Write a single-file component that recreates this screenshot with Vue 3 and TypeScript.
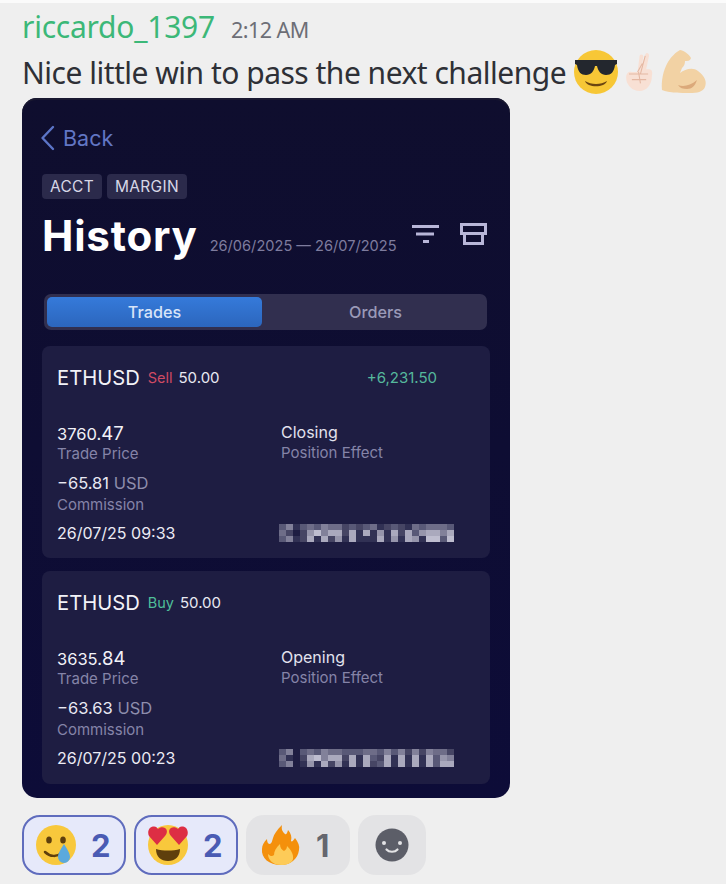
<script setup lang="ts">
interface Trade {
  symbol: string;
  side: "Sell" | "Buy";
  volume: string;
  profit?: string;
  price: [string, string];
  effect: string;
  commission: string;
  time: string;
  blur: string[];
}

// mosaic of the redacted ticket number, one digit per block: 0 is no tint, 9 is brightest
const trades: Trade[] = [
  {
    symbol: "ETHUSD",
    side: "Sell",
    volume: "50.00",
    profit: "+6,231.50",
    price: ["3760.", "47"],
    effect: "Closing",
    commission: "−65.81",
    time: "26/07/25 09:33",
    blur: [
      "3513435442323412321434443",
      "4202685772717161727367757",
      "3512717261711171617618838",
    ],
  },
  {
    symbol: "ETHUSD",
    side: "Buy",
    volume: "50.00",
    price: ["3635.", "84"],
    effect: "Opening",
    commission: "−63.63",
    time: "26/07/25 00:23",
    blur: [
      "3503435443334435352525442",
      "4102785772717327171717365",
      "3501617261717237171717377",
    ],
  },
];

const cells = (rows: string[]) =>
  rows.flatMap((row, y) =>
    [...row].map((c, x) => ({ x: x * 7, y: y * 6, o: Number(c) / 10 })),
  );
</script>

<template>
  <div class="page">
    <div class="top-line"></div>
    <div class="head">
      <span class="user">riccardo_1397</span>
      <span class="stamp">2:12 AM</span>
    </div>
    <div class="message">
      <span>Nice little win to pass the next challenge</span>
      <svg class="emoji cool" viewBox="0 0 44 44">
        <circle cx="22" cy="22" r="22" fill="#f7c736" />
        <path d="M1 10h42v4l-2 1c-1 7-4 10-9 10s-8-4-9-9h-2c-1 5-4 9-9 9s-8-3-9-10l-2-1z" fill="#23272e" />
        <path d="M11 31c6 4 16 4 22 0-2 7-20 7-22 0z" fill="#6b4511" />
      </svg>
      <svg class="emoji fingers" viewBox="0 0 30 44">
        <path d="M13 22 15 6c0-3 4-3 4 0l-1 7 3-9c1-3 4-2 4 1l-3 14h3c3 0 4 3 3 7 0 9-5 16-13 16C8 42 1 36 1 28c0-5 3-7 6-6z" fill="#f8e0d4" />
        <path d="M13 22 18 13M16 24 21 5M4 24h20M7 30h15M14 22l2 12" stroke="#e4b7a2" stroke-width="1.100" fill="none" />
      </svg>
      <svg class="emoji muscle" viewBox="0 0 46 44">
        <path d="M1 40c-1-8 1-20 6-28 3-5 8-10 12-12 3 0 9 4 11 8-1 3-3 3-6 3 0 3-1 5-3 7l-2 5c5-4 13-6 18-2 7 5 9 11 7 16-2 5-8 6-15 6-9 0-21 0-28-3z" fill="#f2d2a4" />
        <path d="M17 35c5 2 12 1 19-5-2 6-5 9-10 9-4 0-7-1-9-4z" fill="#dba97a" />
      </svg>
    </div>

    <div class="shot">
      <div class="back">
        <svg class="chev" viewBox="0 0 15 26">
          <path d="M13 2 2.500 13 13 24" />
        </svg>
        <span>Back</span>
      </div>
      <div class="tags">
        <span class="tag">ACCT</span>
        <span class="tag">MARGIN</span>
      </div>
      <div class="title-row">
        <span class="title">History</span>
        <span class="range">26/06/2025 — 26/07/2025</span>
        <div class="tools">
          <svg class="tool" viewBox="0 0 27 18">
            <path d="M0 1.500h27M4 9h18M11 16.500h6" />
          </svg>
          <svg class="tool printer" viewBox="0 0 27 22">
            <path d="M1.500 1.500h24v9h-24zM4.500 10.500v10h18v-10" />
          </svg>
        </div>
      </div>

      <div class="tabs">
        <div class="tab on">Trades</div>
        <div class="tab">Orders</div>
      </div>

      <div v-for="t in trades" :key="t.time" class="card">
        <div class="card-top">
          <span class="symbol">{{ t.symbol }}</span>
          <span :class="t.side === 'Sell' ? 'sell' : 'buy'">{{ t.side }}</span>
          <span class="vol">{{ t.volume }}</span>
          <span v-if="t.profit" class="profit">{{ t.profit }}</span>
        </div>
        <div class="cols">
          <div>
            <div class="price">{{ t.price[0] }}<span class="cents">{{ t.price[1] }}</span></div>
            <div class="label">Trade Price</div>
          </div>
          <div>
            <div class="effect">{{ t.effect }}</div>
            <div class="label">Position Effect</div>
          </div>
        </div>
        <div class="comm">
          {{ t.commission }} <span class="unit">USD</span>
        </div>
        <div class="label comm-label">Commission</div>
        <div class="cols foot">
          <div class="time">{{ t.time }}</div>
          <svg class="mosaic" viewBox="0 0 175 18">
            <rect
              v-for="(c, i) in cells(t.blur)"
              :key="i"
              :x="c.x"
              :y="c.y"
              width="7"
              height="6"
              fill="#e6e6f2"
              :fill-opacity="c.o"
            />
          </svg>
        </div>
      </div>
    </div>

    <div class="reactions">
      <div class="chip mine">
        <svg class="chip-icon" viewBox="0 0 40 40">
          <circle cx="20" cy="20" r="20" fill="#f8c83c" />
          <ellipse cx="13" cy="15" rx="2.800" ry="3.600" fill="#5f3f0c" />
          <ellipse cx="27" cy="15" rx="2.800" ry="3.600" fill="#5f3f0c" />
          <path d="M9 27c5 5 12 5 17 1" stroke="#5f3f0c" stroke-width="2.500" fill="none" stroke-linecap="round" />
          <path d="M28 19c3 5 6 9 6 13a6 6 0 0 1-12 0c0-4 3-8 6-13z" fill="#5ba9dd" />
        </svg>
        <span>2</span>
      </div>
      <div class="chip mine">
        <svg class="chip-icon" viewBox="0 0 40 40">
          <circle cx="20" cy="20" r="20" fill="#f8c83c" />
          <path d="M9 20 1 11C-1 7 1 2 5 1.500c3-.5 4 1 5 2.500 2-2 5-2.500 7-1 3 2 2 6 0 8z" fill="#dd2e44" />
          <path d="M31 20l8-9c2-4 0-9-4-9.500-3-.5-4 1-5 2.500-2-2-5-2.500-7-1-3 2-2 6 0 8z" fill="#dd2e44" />
          <path d="M8 24c7 2 17 2 24 0 0 8-5 12-12 12S8 32 8 24z" fill="#5f3f0c" />
        </svg>
        <span>2</span>
      </div>
      <div class="chip">
        <svg class="chip-icon fire" viewBox="0 0 40 40">
          <path d="M20 40C8 40 0 33 1 24c0-4 2-7 5-10 0 3 1 5 3 5 2-1 2-3 3-6 1-4 4-8 9-13-1 5 1 7 3 9 1 1 2 0 3-4 3 3 4 7 3 11 1 1 2 0 4-3 3 4 5 8 4 12-1 9-9 15-18 15z" fill="#f4900c" />
          <path d="M20 40c-8 0-13-5-13-11 2 2 4 3 6 1 0-4 2-7 6-11 0 4 2 6 4 7 2-1 3-3 3-5 3 3 7 8 6 13-1 4-6 6-12 6z" fill="#fdcb58" />
        </svg>
        <span class="grey">1</span>
      </div>
      <div class="chip add">
        <svg class="add-icon" viewBox="0 0 34 34">
          <circle cx="17" cy="17" r="16.500" fill="#5c5e68" />
          <circle cx="9" cy="15" r="2" fill="#e3e3e5" />
          <circle cx="25" cy="15" r="2" fill="#e3e3e5" />
          <path d="M11.500 21.500c2.500 3 8.500 3 11 0" stroke="#e3e3e5" stroke-width="2.200" fill="none" stroke-linecap="round" />
        </svg>
      </div>
    </div>
  </div>
</template>

<style scoped>
.page {
  width: 726px;
  height: 884px;
  background: #efefef;
  overflow: hidden;
  box-sizing: border-box;
  padding-left: 22px;
  font-family: "Noto Sans", sans-serif;
}

.top-line {
  height: 3px;
  margin-left: -22px;
  background: #fbfbfb;
}

.head {
  display: flex;
  align-items: baseline;
  gap: 16px;
  height: 42px;
  padding-top: 6px;
  box-sizing: border-box;
  line-height: 36px;
}

.user {
  font-size: 30px;
  color: #3cb878;
  letter-spacing: -0.25px;
}

.stamp {
  font-size: 21.500px;
  color: #6d6e76;
  letter-spacing: -0.5px;
}

.message {
  display: flex;
  align-items: center;
  height: 52px;
  margin-top: 1px;
  font-size: 30px;
  letter-spacing: -0.5px;
  color: #2e3036;
}

.emoji {
  flex: none;
}

.cool {
  width: 44px;
  height: 44px;
  margin-left: 8px;
}

.fingers {
  width: 29px;
  height: 42px;
  margin-left: 7px;
}

.muscle {
  width: 46px;
  height: 44px;
  margin-left: 7px;
}

.shot {
  box-sizing: border-box;
  width: 488px;
  height: 700px;
  padding: 26px 20px 0;
  border-radius: 15px;
  background: linear-gradient(#0f0e2e, #0d0c38);
  box-shadow: inset 0 2px 0 #191830;
  font-family: Inter, sans-serif;
  color: #f2f2f8;
}

.back {
  display: flex;
  align-items: center;
  gap: 8px;
  height: 28px;
  margin-left: -2px;
  font-size: 21.500px;
  color: #6276c4;
}

.chev {
  width: 15px;
  height: 26px;
  fill: none;
  stroke: #5c75c8;
  stroke-width: 2.400;
  stroke-linecap: round;
  stroke-linejoin: round;
}

.tags {
  display: flex;
  gap: 5px;
  margin-top: 22px;
}

.tag {
  padding: 0 8px;
  height: 25px;
  line-height: 25px;
  border-radius: 4px;
  background: #2b2a4b;
  font-size: 15.500px;
  letter-spacing: 0.3px;
  color: #d7d7e6;
}

.title-row {
  display: flex;
  align-items: baseline;
  margin-top: 11px;
  height: 50px;
}

.title {
  font-size: 42px;
  font-weight: 700;
  color: #fff;
  letter-spacing: 0.8px;
}

.range {
  margin-left: 12px;
  font-size: 14.600px;
  color: #7e7c9e;
}

.tools {
  display: flex;
  align-items: flex-start;
  gap: 21px;
  align-self: flex-start;
  margin: 14px 3px 0 auto;
}

.tool {
  width: 27px;
  height: 18px;
  margin-top: 1px;
  fill: none;
  stroke: #b8b6d8;
  stroke-width: 3;
}

.printer {
  height: 22px;
  margin-top: -1px;
}

.tabs {
  box-sizing: border-box;
  display: flex;
  width: 443px;
  height: 36px;
  margin: 34px 0 0 2px;
  padding: 3px;
  border-radius: 7px;
  background: #312f4f;
}

.tab {
  flex: 1;
  padding-left: 5px;
  text-align: center;
  line-height: 30px;
  font-size: 16.200px;
  font-weight: 500;
  color: #9a9ab8;
}

.tab.on {
  flex: none;
  width: 215px;
  padding-left: 0;
  border-radius: 5px;
  background: linear-gradient(#357ada, #2c66bd);
  color: #d8e4f8;
}

.card {
  box-sizing: border-box;
  width: 448px;
  height: 212px;
  margin-top: 16px;
  padding: 17px 15px 0;
  border-radius: 8px;
  background: #1e1d42;
}

.card + .card {
  margin-top: 13px;
  height: 213px;
}

.card-top {
  display: flex;
  align-items: center;
  height: 28px;
  font-size: 14.500px;
}

.symbol {
  font-size: 20.200px;
  margin-right: 8px;
}

.sell {
  color: #cf4a63;
  margin-right: 6px;
}

.buy {
  color: #4fbf9a;
  margin-right: 6px;
}

.vol {
  font-size: 15px;
  color: #e9e9f2;
}

.profit {
  margin-left: auto;
  margin-right: 38px;
  font-size: 15px;
  color: #55b89c;
}

.cols {
  display: grid;
  grid-template-columns: 224px 1fr;
}

.card-top + .cols {
  margin-top: 30px;
}

.price {
  font-size: 16.500px;
  line-height: 20px;
  margin-top: 2px;
}

.cents {
  font-size: 18.500px;
}

.effect {
  font-size: 16px;
  line-height: 21px;
  margin-top: 1px;
  color: #e2e2ee;
}

.label {
  font-size: 15px;
  line-height: 20px;
  color: #8584a8;
}

.comm {
  margin-top: 9px;
  font-size: 16.500px;
  line-height: 20px;
  color: #e8e8f2;
}

.unit {
  color: #8e8dac;
}

.comm-label {
  margin-top: 2px;
}

.foot {
  align-items: center;
  margin-top: 8px;
}

.time {
  font-size: 16px;
  line-height: 20px;
  color: #ecebf4;
}

.mosaic {
  display: block;
  width: 175px;
  height: 18px;
  margin-left: -2px;
}

.reactions {
  display: flex;
  gap: 8px;
  margin-top: 17px;
}

.chip {
  box-sizing: border-box;
  display: flex;
  align-items: center;
  width: 104px;
  height: 60px;
  padding-left: 14px;
  border-radius: 18px;
  background: #e3e3e5;
  font-family: Inter, sans-serif;
  font-size: 31px;
  font-weight: 700;
}

.chip.mine {
  border: 2px solid #5f6cbd;
  background: #e6e9fa;
  color: #4a5bb3;
  padding-left: 12px;
}

.chip-icon {
  width: 40px;
  height: 40px;
  margin-right: 15px;
  flex: none;
}

.fire {
  margin-left: 1px;
}

.grey {
  color: #65666e;
}

.add {
  width: 68px;
  justify-content: center;
  padding: 0;
}

.add-icon {
  width: 34px;
  height: 34px;
}
</style>
